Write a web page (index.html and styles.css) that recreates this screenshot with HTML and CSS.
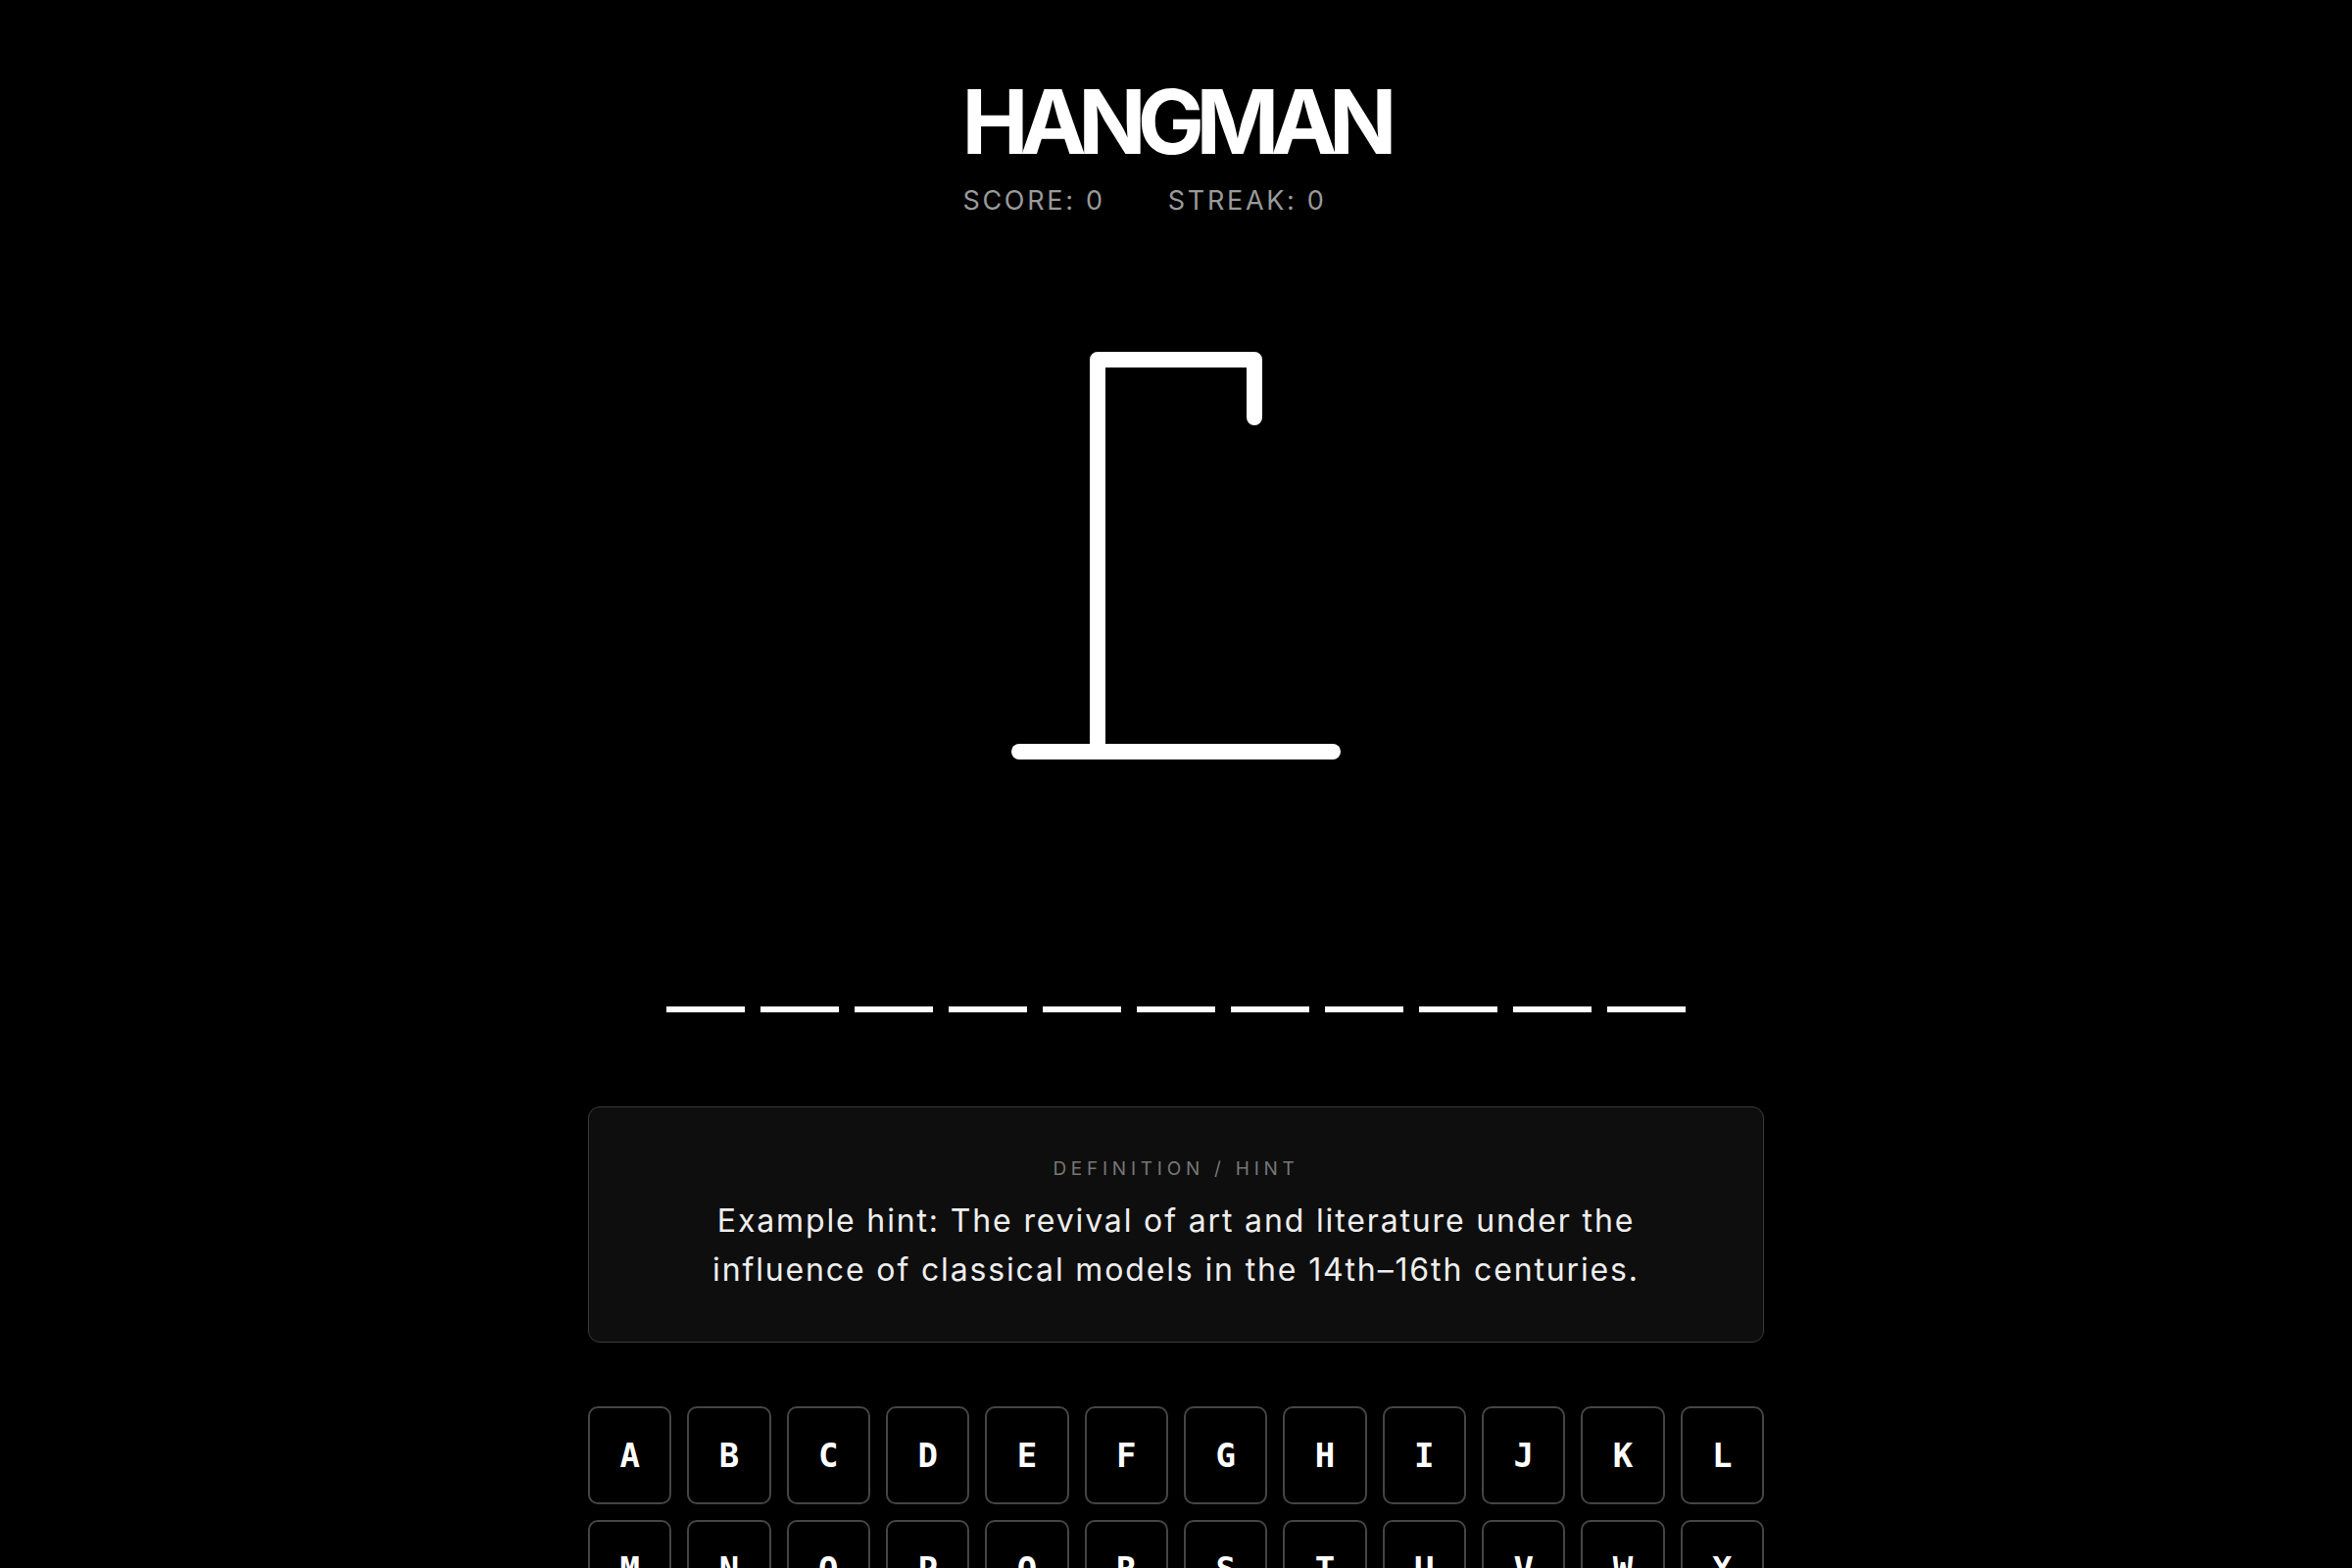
FILE: index.html
```html
<!DOCTYPE html>
<html lang="en">
<head>
<meta charset="utf-8">
<title>Hangman</title>
<link rel="stylesheet" href="styles.css">
</head>
<body>
<main class="game">
  <header class="header">
    <h1 class="title">HANGMAN</h1>
    <div class="stats">
      <span class="stat">SCORE: 0</span>
      <span class="stat">STREAK: 0</span>
      <span class="stat"></span>
    </div>
  </header>

  <svg class="gallows" width="400" height="500" viewBox="0 0 400 500" aria-hidden="true">
    <path d="M40 468 H360"/>
    <path d="M120 468 V68 H280 V127"/>
  </svg>

  <div class="word">
    <span class="blank"></span><span class="blank"></span><span class="blank"></span><span class="blank"></span><span class="blank"></span><span class="blank"></span><span class="blank"></span><span class="blank"></span><span class="blank"></span><span class="blank"></span><span class="blank"></span>
  </div>

  <section class="hint">
    <div class="hint-label">DEFINITION / HINT</div>
    <p class="hint-text">Example hint: The revival of art and literature under the influence of classical models in the 14th–16th centuries.</p>
  </section>

  <div class="keyboard">
    <button class="key">A</button><button class="key">B</button><button class="key">C</button><button class="key">D</button><button class="key">E</button><button class="key">F</button><button class="key">G</button><button class="key">H</button><button class="key">I</button><button class="key">J</button><button class="key">K</button><button class="key">L</button>
    <button class="key">M</button><button class="key">N</button><button class="key">O</button><button class="key">P</button><button class="key">Q</button><button class="key">R</button><button class="key">S</button><button class="key">T</button><button class="key">U</button><button class="key">V</button><button class="key">W</button><button class="key">X</button>
    <button class="key">Y</button><button class="key">Z</button>
  </div>
</main>
</body>
</html>
```
FILE: styles.css
```css
html, body {
  margin: 0;
  background: #000;
}
body {
  font-family: Inter, "Noto Sans", sans-serif;
  color: #fff;
}
.game {
  width: 1200px;
  margin: 0 auto;
  padding-top: 79px;
  display: flex;
  flex-direction: column;
  align-items: center;
}
.header {
  display: flex;
  flex-direction: column;
  align-items: center;
}
.title {
  margin: 0;
  font-family: Inter, sans-serif;
  font-weight: 700;
  font-size: 91px;
  line-height: 1;
  letter-spacing: -0.095em;
  text-indent: -0.02em;
  color: #fff;
}
.stats {
  display: flex;
  gap: 64px;
  margin-top: 19px;
  font-size: 27px;
  line-height: 1.2;
  letter-spacing: 0.1em;
  color: #9a9a9a;
}
.gallows {
  display: block;
  margin-top: 78px;
}
.gallows path {
  fill: none;
  stroke: #fff;
  stroke-width: 16;
  stroke-linecap: round;
  stroke-linejoin: round;
}
.word {
  display: flex;
  gap: 16px;
  margin-top: 228px;
}
.blank {
  width: 80px;
  height: 6px;
  background: #fff;
}
.hint {
  box-sizing: border-box;
  width: 100%;
  margin-top: 96px;
  padding: 52px 80px 48px;
  border: 1px solid #3a3a3a;
  border-radius: 12px;
  background: #0e0e0e;
  text-align: center;
}
.hint-label {
  font-size: 19px;
  line-height: 1.2;
  letter-spacing: 0.25em;
  color: #777;
}
.hint-text {
  margin: 16px 0 0;
  font-size: 32px;
  line-height: 50px;
  letter-spacing: 0.058em;
  color: #eee;
}
.keyboard {
  width: 100%;
  margin-top: 65px;
  display: grid;
  grid-template-columns: repeat(12, 1fr);
  gap: 16px;
}
.key {
  height: 100px;
  padding: 0;
  background: #000;
  border: 2px solid #454545;
  border-radius: 10px;
  color: #fff;
  font-family: "DejaVu Sans Mono", "Liberation Mono", monospace;
  font-weight: 700;
  font-size: 34px;
}
```
